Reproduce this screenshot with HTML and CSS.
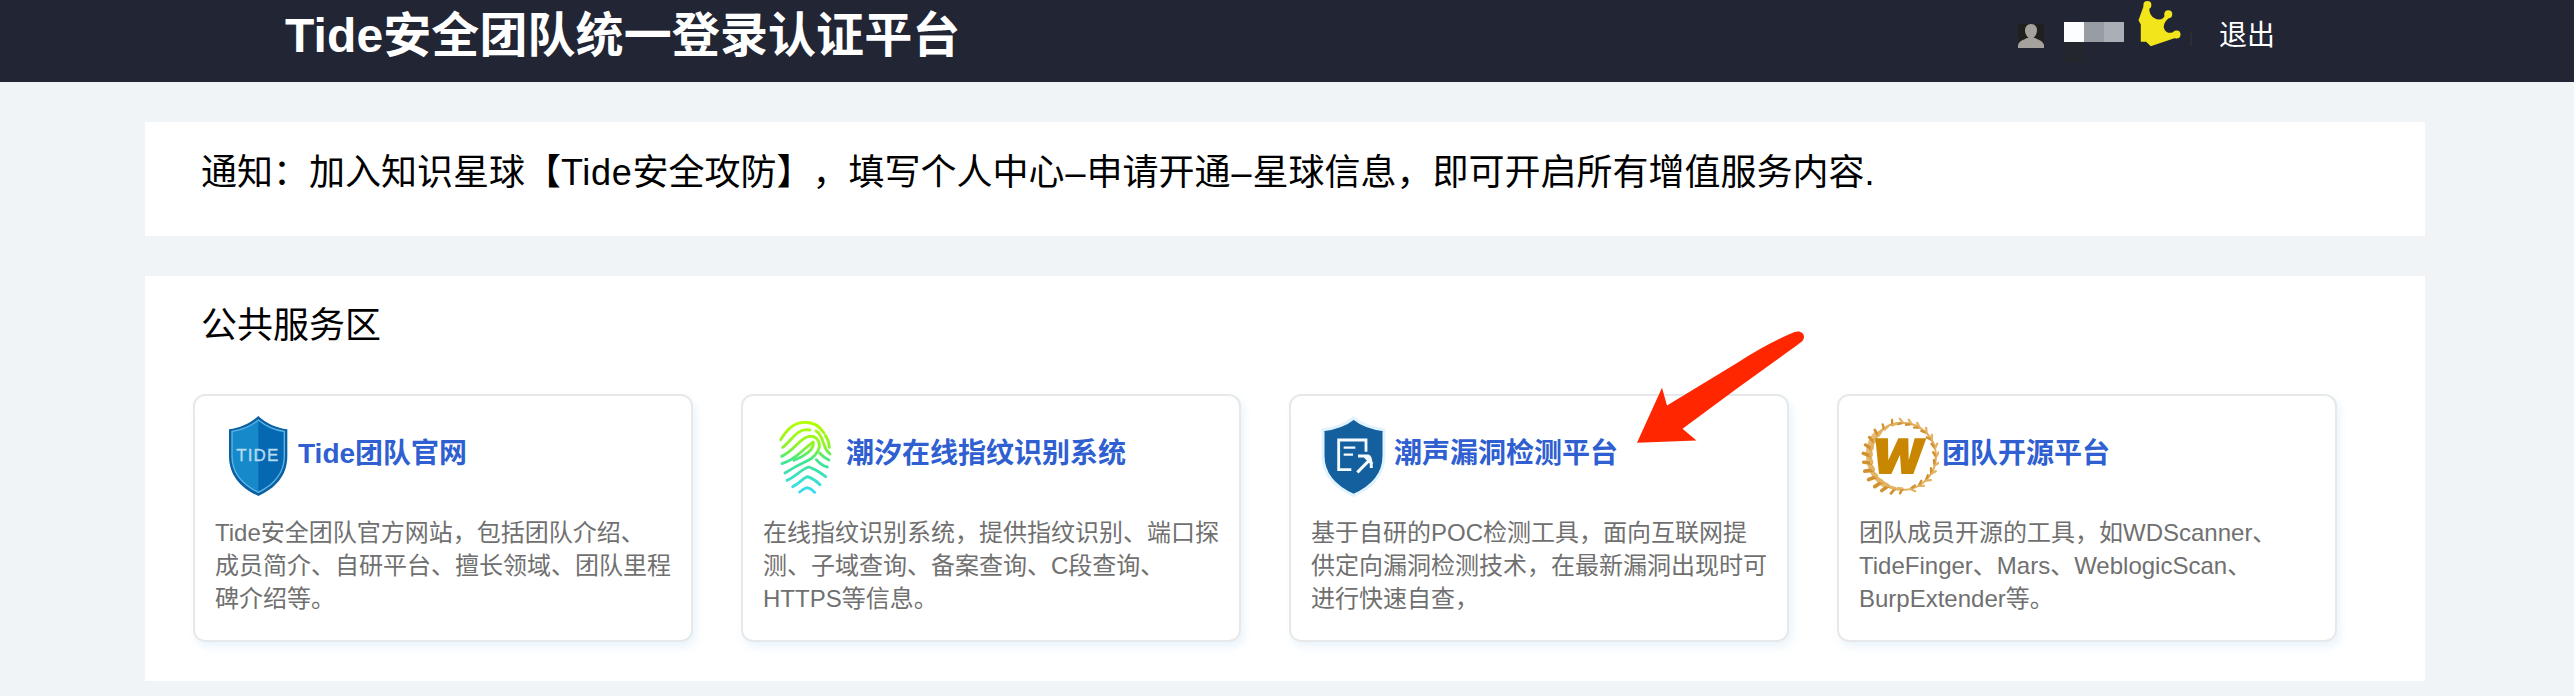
FILE: index.html
```html
<!DOCTYPE html>
<html lang="zh-CN">
<head>
<meta charset="utf-8">
<title>Tide安全团队统一登录认证平台</title>
<link rel="stylesheet" href="styles.css">
</head>
<body>
<header class="topbar">
  <h1 class="brand">Tide安全团队统一登录认证平台</h1>
  <div class="user">
    <svg class="avatar" viewBox="0 0 26 24">
      <rect width="26" height="24" fill="#20201f"/>
      <path d="M0 24v-3q1-4 6-5.500l3-1.500h8l3 1.500q5 1.500 6 5.500v3z" fill="#a5a19d"/>
      <path d="M13 0c4 0 6 3 6 6.500S16 15 13 15 7 10 7 6.500 9 0 13 0z" fill="#a5a19d"/>
    </svg>
    <div class="mask"><i class="m1"></i><i class="m2"></i><i class="m3"></i><i class="m4"></i></div>
    <svg class="crown" viewBox="475 0 135 145">
      <path d="M476 61L493 14l17 3c-6 25 10 40 28 42 10 0 16-6 19-16l18 6c-16 10-25 25-22 36 4 15 19 17 33 11l5 17-78 27-14-14h-16V74z" fill="#f3e51c"/>
      <circle cx="503" cy="15" r="12" fill="#f3e51c"/>
      <circle cx="566" cy="43" r="12" fill="#f3e51c"/>
      <circle cx="591" cy="104" r="12" fill="#f3e51c"/>
    </svg>
    <span class="divider"></span>
    <a class="logout">退出</a>
  </div>
</header>
<main class="page">
  <section class="panel notice">
    <p class="notice-text">通知：加入知识星球【<span class="latin">Tide</span>安全攻防】，填写个人中心<span class="dash">–</span>申请开通<span class="dash">–</span>星球信息，即可开启所有增值服务内容.</p>
  </section>
  <section class="panel services">
    <h2 class="section-title">公共服务区</h2>
    <div class="cards">
      <article class="card">
        <div class="card-head">
          <svg class="icon" viewBox="1 0 240 270">
            <path d="M131 18C110 38 78 54 43 58v80c0 62 40 98 88 120 48-22 87-58 87-120V58c-35-4-66-20-87-40z" fill="#0b60a3"/>
            <path d="M131 30C110 47 82 60 52 64v74c0 56 36 88 79 109 43-21 78-53 78-109V64c-30-4-57-17-78-34z" fill="#1689ca" stroke="#5cb4e2" stroke-width="4"/>
            <path d="M131 33v211c42-21 75-52 75-106V67c-29-4-55-17-75-34z" fill="#0568b0"/>
            <text x="65" y="154" class="shield-text" textLength="126">TIDE</text>
          </svg>
          <h3 class="card-title">Tide团队官网</h3>
        </div>
        <p class="desc">Tide安全团队官方网站，包括团队介绍、<br>成员简介、自研平台、擅长领域、团队里程<br>碑介绍等。</p>
      </article>
      <article class="card">
        <div class="card-head">
          <svg class="icon" viewBox="-5 0 240 270">
            <defs>
              <linearGradient id="print" gradientUnits="userSpaceOnUse" x1="0" y1="35" x2="0" y2="250"><stop offset="0" stop-color="#b5ff00"/><stop offset=".35" stop-color="#8cf32c"/><stop offset=".55" stop-color="#3fe690"/><stop offset="1" stop-color="#38dbf8"/></linearGradient>
            </defs>
            <g fill="none" stroke="url(#print)" stroke-width="8.500" stroke-linecap="round" stroke-linejoin="round">
              <path d="M48 89C65 62 84 39 116 37c32-2 52 16 62 32"/>
              <path d="M182 76q11 16 12 36"/>
              <path d="M54 112C80 92 95 60 124 59l12 1"/>
              <path d="M154 63c16 9 20 29 24 41q5 17 18 28"/>
              <path d="M51 139C91 121 103 85 133 79c27-3 37 23 27 43-12 23-29 29-47 38-22 10-35 19-52 29"/>
              <path d="M52 161C92 149 106 127 129 109q11-8 16-13"/>
              <path d="M146 98c2 20-16 32-35 42L88 151"/>
              <path d="M165 129q13 15 28 21M155 149q15 18 33 22"/>
              <path d="M67 211C95 199 110 177 133 171q29 11 50 29"/>
              <path d="M84 230C106 219 115 204 129 200q22 8 37 24"/>
              <path d="M105 246q13-11 23-13 12 3 22 14"/>
            </g>
          </svg>
          <h3 class="card-title">潮汐在线指纹识别系统</h3>
        </div>
        <p class="desc">在线指纹识别系统，提供指纹识别、端口探<br>测、子域查询、备案查询、C段查询、<br>HTTPS等信息。</p>
      </article>
      <article class="card">
        <div class="card-head">
          <svg class="icon" viewBox="3 0 240 270">
            <path d="M131 24C108 43 78 54 39 59v78c0 58 39 95 92 119 53-24 91-61 91-119V59c-39-5-68-16-91-35z" fill="#14609f" stroke="#e2f3fd" stroke-width="9"/>
            <g fill="none" stroke="#f5fbff" stroke-width="8.500">
              <path d="M168 125V90H86v89h38"/>
              <path d="M101 113h35M101 134h28" stroke-width="7"/>
              <path d="M142 187l35-35M144 138h31q9 2 9 36M163 138l24 24" stroke-width="9"/>
            </g>
          </svg>
          <h3 class="card-title">潮声漏洞检测平台</h3>
        </div>
        <p class="desc">基于自研的POC检测工具，面向互联网提<br>供定向漏洞检测技术，在最新漏洞出现时可<br>进行快速自查，</p>
      </article>
      <article class="card">
        <div class="card-head">
          <svg class="icon" viewBox="13 0 240 270">
            <defs>
              <g id="sprig" stroke-width="7" stroke-linecap="round" fill="none">
                <path d="M0 0l11-10" stroke="#d2912f"/>
                <path d="M0 2l13 5" stroke="#e3b263"/>
              </g>
            </defs>
            <circle cx="143" cy="139" r="101" fill="none" stroke="#e0ad5a" stroke-width="6"/>
            <path d="M66 66C24 112 30 190 98 234" fill="none" stroke="#e6bd78" stroke-width="12"/>
            <g transform="translate(143 139)">
              <use href="#sprig" transform="rotate(-90) translate(100) rotate(-60)"/>
              <use href="#sprig" transform="rotate(-75) translate(100) rotate(-70)"/>
              <use href="#sprig" transform="rotate(-60) translate(100) rotate(-80)"/>
              <use href="#sprig" transform="rotate(-45) translate(100) rotate(-70)"/>
              <use href="#sprig" transform="rotate(-30) translate(100) rotate(-80)"/>
              <use href="#sprig" transform="rotate(-15) translate(100) rotate(-70)"/>
              <use href="#sprig" transform="rotate(0) translate(100) rotate(-80)"/>
              <use href="#sprig" transform="rotate(15) translate(100) rotate(-70)"/>
              <use href="#sprig" transform="rotate(30) translate(100) rotate(-80)"/>
              <use href="#sprig" transform="rotate(45) translate(100) rotate(-70)"/>
              <use href="#sprig" transform="rotate(60) translate(100) rotate(-80)"/>
              <use href="#sprig" transform="rotate(75) translate(100) rotate(-70)"/>
              <use href="#sprig" transform="rotate(90) translate(98) rotate(70)"/>
              <use href="#sprig" transform="rotate(103) translate(100) rotate(70) scale(1.2)"/>
              <use href="#sprig" transform="rotate(116) translate(100) rotate(70) scale(1.5)"/>
              <use href="#sprig" transform="rotate(129) translate(100) rotate(60) scale(1.6)"/>
              <use href="#sprig" transform="rotate(142) translate(100) rotate(60) scale(1.6)"/>
              <use href="#sprig" transform="rotate(155) translate(98) rotate(60) scale(1.6)"/>
              <use href="#sprig" transform="rotate(168) translate(96) rotate(60) scale(1.5)"/>
              <use href="#sprig" transform="rotate(181) translate(96) rotate(60) scale(1.5)"/>
              <use href="#sprig" transform="rotate(194) translate(96) rotate(60) scale(1.4)"/>
              <use href="#sprig" transform="rotate(207) translate(96) rotate(60) scale(1.3)"/>
              <use href="#sprig" transform="rotate(221) translate(97) rotate(60) scale(1.2)"/>
              <use href="#sprig" transform="rotate(236) translate(98) rotate(60)"/>
              <use href="#sprig" transform="rotate(252) translate(99) rotate(60)"/>
            </g>
            <path d="M62 85h38l1 66 30-66h30l1 66 18-66h35l-39 107h-36l-4-58-26 58H73z" fill="#c98600"/>
          </svg>
          <h3 class="card-title">团队开源平台</h3>
        </div>
        <p class="desc">团队成员开源的工具，如WDScanner、<br>TideFinger、Mars、WeblogicScan、<br>BurpExtender等。</p>
      </article>
    </div>
  </section>
</main>
<svg class="arrow" viewBox="1630 320 185 130">
  <path d="M1637 442.700L1662 387.700 1667 405.500 1737 363Q1768 343 1794 332.300C1802 329 1807 336 1802 341.500Q1796 346 1737 388.500L1682.500 428.700 1696.500 440.500z" fill="#ff2600"/>
</svg>
</body>
</html>
```
FILE: styles.css
```css
* { box-sizing: border-box; }
body {
  margin: 0;
  height: 696px;
  overflow: hidden;
  position: relative;
  background: #f0f4f7;
  color: #000;
  font-family: "Liberation Sans", "Noto Sans CJK SC", sans-serif;
  text-spacing-trim: space-all;
}
h1, h2, h3, p { margin: 0; font-weight: 400; white-space: nowrap; }

.topbar {
  height: 82px;
  padding: 0 299px 0 285px;
  display: flex;
  justify-content: space-between;
  align-items: flex-start;
  background: #212534;
}
.brand {
  padding-top: 6px;
  font-size: 48px;
  line-height: 60px;
  font-weight: 700;
  letter-spacing: .1px;
  color: #fff;
}
.user { display: flex; align-items: flex-start; }
.avatar { width: 26px; height: 24px; margin: 24px 20px 0 0; }
.mask {
  display: grid;
  grid-template-columns: repeat(3, 20px);
  grid-template-rows: 20px 20px;
  margin: 22px 14px 0 0;
}
.m1 { background: #fbfdff; }
.m2 { background: #989ca3; }
.m3 { background: #a9afb6; }
.m4 { background: #23262d; }
.crown { width: 45px; height: 48px; }
.divider { width: 2px; height: 14px; margin: 32px 27px 0 7px; background: #2d2d32; }
.logout { font-size: 28px; line-height: 40px; padding-top: 16px; color: #fff; }

.page {
  padding: 40px 149px 0 145px;
  display: flex;
  flex-direction: column;
  gap: 40px;
}
.panel { background: #fff; }
.notice { height: 114px; padding: 26px 56px; }
.notice-text, .section-title { font-size: 36px; line-height: 50px; }
.latin { letter-spacing: .7px; }
.dash { display: inline-block; width: 22px; text-align: center; }
.services { height: 405px; padding: 25px 48px 0; }
.section-title { padding-left: 8px; }
.cards {
  margin-top: 43px;
  display: grid;
  grid-template-columns: repeat(4, 500px);
  gap: 48px;
}
.card {
  height: 248px;
  padding: 14px 20px;
  border: 2px solid #e6e8ea;
  border-radius: 12px;
  box-shadow: 3px 5px 8px rgba(180, 215, 240, .28);
}
.card-head { display: flex; align-items: center; height: 90px; gap: 3px; }
.icon { width: 80px; height: 90px; flex: none; }
.shield-text { font: 51px "Liberation Sans", sans-serif; fill: #b5dcf3; stroke: #b5dcf3; stroke-width: 1px; }
.card-title {
  font-size: 28px;
  line-height: 40px;
  font-weight: 700;
  color: #2f5fd0;
  padding-bottom: 2px;
}
.desc { margin-top: 16px; font-size: 24px; line-height: 33px; color: #707070; }

.arrow { position: absolute; left: 1630px; top: 320px; width: 185px; height: 130px; }
```
